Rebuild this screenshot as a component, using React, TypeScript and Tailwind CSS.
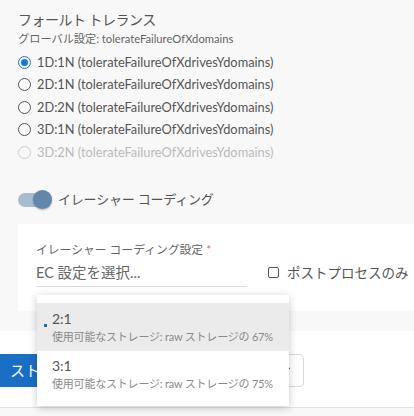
import React from 'react';
import { ChevronDown } from 'lucide-react';

const options = [
  { label: '1D:1N (tolerateFailureOfXdrivesYdomains)', checked: true },
  { label: '2D:1N (tolerateFailureOfXdrivesYdomains)' },
  { label: '2D:2N (tolerateFailureOfXdrivesYdomains)' },
  { label: '3D:1N (tolerateFailureOfXdrivesYdomains)' },
  { label: '3D:2N (tolerateFailureOfXdrivesYdomains)', disabled: true },
];

const Radio: React.FC<{ checked?: boolean; disabled?: boolean }> = ({ checked, disabled }) => {
  if (checked) {
    return (
      <span className="w-[13px] h-[13px] rounded-full border-[1.5px] border-[#1a73e8] flex items-center justify-center">
        <span className="w-[7px] h-[7px] rounded-full bg-[#1a73e8]" />
      </span>
    );
  }
  return (
    <span
      className={`w-[13px] h-[13px] rounded-full border-[1.5px] ${
        disabled ? 'border-[#cfcfcf]' : 'border-[#555]'
      }`}
    />
  );
};

const App: React.FC = () => {
  return (
    <div
      className="w-[414px] h-[416px] bg-[#f8f8f8] relative overflow-hidden"
      style={{ fontFamily: "Lato, 'Noto Sans CJK JP', sans-serif" }}
    >
      {/* フォールトトレランス */}
      <div className="pl-[18px] pt-[9px]">
        <h2 className="text-[14px] tracking-[-0.5px] leading-[22px] text-[#555]">フォールト トレランス</h2>
        <div className="text-[11.2px] leading-[14px] text-[#666] mt-[1px] whitespace-nowrap">
          グローバル設定: tolerateFailureOfXdomains
        </div>
        <div className="mt-[5px] flex flex-col">
          {options.map((o) => (
            <label key={o.label} className="flex items-center h-[22.5px] gap-[6px]">
              <Radio checked={o.checked} disabled={o.disabled} />
              <span className={`text-[12.8px] whitespace-nowrap ${o.disabled ? 'text-[#bbb]' : 'text-[#555]'}`}>
                {o.label}
              </span>
            </label>
          ))}
        </div>
      </div>

      {/* toggle */}
      <div className="flex items-center pl-[18px] mt-[25px] h-[22px]">
        <div className="relative w-[33px] h-[20px] flex items-center">
          <span className="w-[27px] h-[14px] rounded-full bg-[#a6bccf]" />
          <span className="absolute left-[15px] top-0 w-[19px] h-[19px] rounded-full bg-[#6188a8] shadow-[0_1px_2px_rgba(0,0,0,0.3)]" />
        </div>
        <span className="ml-[7px] text-[13px] tracking-[-0.2px] text-[#555] whitespace-nowrap">
          イレーシャー コーディング
        </span>
      </div>

      {/* EC panel */}
      <div className="ml-[18px] mt-[13px] h-[87px] bg-white flex pl-[18px] pt-[18px]">
        <div className="w-[211px]">
          <div className="text-[11.8px] leading-[16px] text-[#666] whitespace-nowrap">
            イレーシャー コーディング設定 <span className="text-[#e0607e]">*</span>
          </div>
          <div className="mt-[5px] h-[24px] border-b border-[#ddd] text-[14.5px] leading-[20px] text-[#666] whitespace-nowrap">
            EC 設定を選択...
          </div>
        </div>
        <label className="ml-[21px] mt-[22px] flex items-start gap-[8px] h-[20px]">
          <span className="mt-[3px] w-[11px] h-[11px] rounded-[2px] border-[1.5px] border-[#555]" />
          <span className="text-[13.5px] leading-[18px] text-[#555] whitespace-nowrap">ポストプロセスのみ</span>
        </label>
      </div>

      {/* footer */}
      <div className="mt-[20px] h-[77px] bg-white border-b border-[#e3e3e3] flex items-center pt-[3px]">
        <button className="h-[33px] w-[120px] bg-[#1a6fc4] text-white text-[15px] text-left pl-[10px] whitespace-nowrap overflow-hidden">
          ストレージ
        </button>
        <button className="ml-[80px] h-[33px] w-[104px] border border-[#dcdcdc] rounded-[4px] bg-white flex items-center justify-end pr-[10px] text-[#555]">
          <ChevronDown size={14} strokeWidth={2} />
        </button>
      </div>

      {/* dropdown */}
      <div className="absolute left-[37px] top-[295px] w-[252px] bg-white pt-[8px] pb-[2px] shadow-[0_2px_8px_rgba(0,0,0,0.22)]">
        <div className="bg-[#ebebeb] h-[48px] pl-[15px] pt-[6px] relative">
          <span className="absolute left-[7px] top-[21px] w-[3px] h-[3px] bg-[#1a6fc4]" />
          <div className="text-[14px] leading-[20px] text-[#555]">2:1</div>
          <div className="text-[11px] tracking-[-0.2px] leading-[16px] text-[#8a8a8a] whitespace-nowrap">
            使用可能なストレージ: raw ストレージの 67%
          </div>
        </div>
        <div className="h-[53px] pl-[15px] pt-[5px]">
          <div className="text-[14px] leading-[20px] text-[#555]">3:1</div>
          <div className="text-[11px] tracking-[-0.2px] leading-[16px] text-[#8a8a8a] whitespace-nowrap">
            使用可能なストレージ: raw ストレージの 75%
          </div>
        </div>
      </div>
    </div>
  );
};

export default App;
